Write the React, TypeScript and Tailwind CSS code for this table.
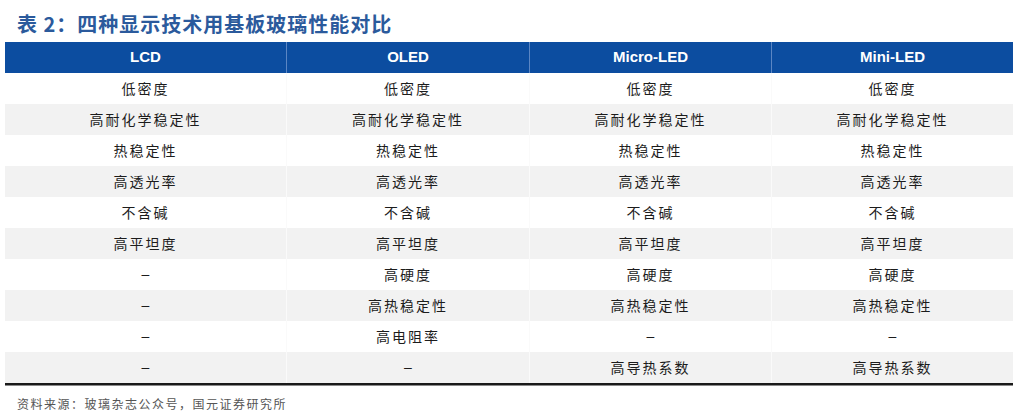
const columns = ['LCD', 'OLED', 'Micro-LED', 'Mini-LED'];

const rows: string[][] = [
  ['低密度', '低密度', '低密度', '低密度'],
  ['高耐化学稳定性', '高耐化学稳定性', '高耐化学稳定性', '高耐化学稳定性'],
  ['热稳定性', '热稳定性', '热稳定性', '热稳定性'],
  ['高透光率', '高透光率', '高透光率', '高透光率'],
  ['不含碱', '不含碱', '不含碱', '不含碱'],
  ['高平坦度', '高平坦度', '高平坦度', '高平坦度'],
  ['–', '高硬度', '高硬度', '高硬度'],
  ['–', '高热稳定性', '高热稳定性', '高热稳定性'],
  ['–', '高电阻率', '–', '–'],
  ['–', '–', '高导热系数', '高导热系数'],
];

const grid = 'grid grid-cols-[281px_243px_242px_242px]';

export default function App() {
  return (
    <div className="h-[416px] w-[1018px] bg-white font-['Noto_Sans_CJK_SC',sans-serif]">
      <h1 className="pl-[17px] pt-[11px] text-[20px] font-bold leading-[26px] tracking-[1px] text-[#2b5a9c]">
        表 2：四种显示技术用基板玻璃性能对比
      </h1>

      <div className="ml-[5px] mt-[5px] w-[1008px]">
        <div className={`${grid} h-[31px] bg-[#0c4da0]`}>
          {columns.map((c, i) => (
            <div
              key={c}
              className={`flex items-center justify-center font-['Liberation_Sans',Arial,sans-serif] text-[15px] font-bold text-white ${
                i > 0 ? 'border-l border-[#5b86c4]' : ''
              }`}
            >
              {c}
            </div>
          ))}
        </div>

        {rows.map((r, ri) => (
          <div key={ri} className={`${grid} h-[31px] ${ri % 2 === 1 ? 'bg-[#f2f2f2]' : 'bg-white'}`}>
            {r.map((cell, ci) => (
              <div
                key={ci}
                className={`flex items-center justify-center text-[14px] text-[#1c1c1c] ${
                  cell === '–' ? "font-['Liberation_Sans',Arial,sans-serif]" : 'tracking-[2px]'
                } ${ci > 0 ? 'border-l border-[#fafafa]' : ''}`}
              >
                {cell}
              </div>
            ))}
          </div>
        ))}

        <div className="h-[3px] border-t-2 border-b border-t-[#1a1a1a] border-b-[#8a8a8a]" />
      </div>

      <p className="pl-[17px] pt-[9px] text-[12px] tracking-[1.5px] text-[#555]">
        资料来源：玻璃杂志公众号，国元证券研究所
      </p>
    </div>
  );
}
